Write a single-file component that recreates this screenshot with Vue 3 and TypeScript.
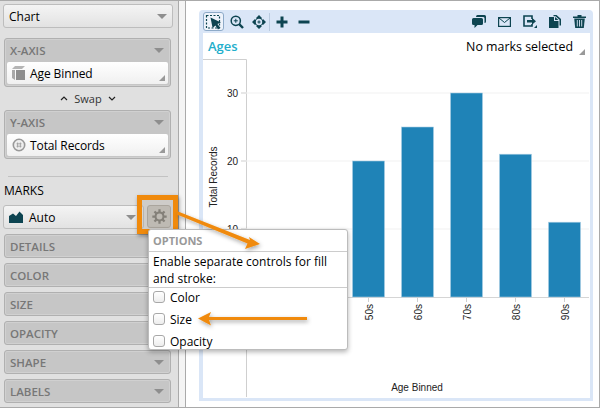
<script setup lang="ts">
interface Bar { label: string; value: number; x: number }
const bars: Bar[] = [
  { label: '50s', value: 20, x: 149.5 },
  { label: '60s', value: 25, x: 198.5 },
  { label: '70s', value: 30, x: 247.5 },
  { label: '80s', value: 21, x: 296.5 },
  { label: '90s', value: 11, x: 345.5 },
]
const baseY = 238
const unit = 6.8
const ticks = [10, 20, 30]
const tickY = (v: number) => baseY - v * unit
const closedPanels = ['DETAILS', 'COLOR', 'SIZE', 'OPACITY', 'SHAPE', 'LABELS']
const options = ['Color', 'Size', 'Opacity']
</script>

<template>
  <div class="page">
    <aside class="sidebar">
      <div class="select chart-select"><span>Chart</span><i class="caret"></i></div>

      <section class="panel axis first">
        <header><span>X-AXIS</span><i class="caret"></i></header>
        <div class="field">
          <svg class="field-icon" viewBox="0 0 14 14" width="14" height="14">
            <path d="M0 3 L3 0 H13 L10 3 Z" fill="#b5b5b5" />
            <path d="M0 4 H3 V14 L0 12 Z" fill="#a8a8a8" />
            <rect x="4" y="4" width="9" height="10" fill="#8d8d8d" />
          </svg>
          <span>Age Binned</span><i class="corner"></i>
        </div>
      </section>

      <div class="swap">
        <svg width="8" height="5" viewBox="0 0 8 5"><path d="M1 4 L4 1 L7 4" fill="none" stroke="#222" stroke-width="1.2" /></svg>
        <span>Swap</span>
        <svg width="8" height="5" viewBox="0 0 8 5"><path d="M1 1 L4 4 L7 1" fill="none" stroke="#222" stroke-width="1.2" /></svg>
      </div>

      <section class="panel axis">
        <header><span>Y-AXIS</span><i class="caret"></i></header>
        <div class="field">
          <svg class="field-icon" viewBox="0 0 14 14" width="14" height="14">
            <circle cx="7" cy="7" r="5.7" fill="#eee" stroke="#999" stroke-width="1.6" />
            <path d="M5.6 4.5 V9.5 M8.4 4.5 V9.5 M4.5 5.8 H9.5 M4.5 8.2 H9.5" stroke="#999" stroke-width="0.8" />
          </svg>
          <span>Total Records</span><i class="corner"></i>
        </div>
      </section>

      <hr class="rule" />
      <div class="marks-title">MARKS</div>

      <div class="marks-row">
        <div class="select auto-select">
          <svg width="14" height="12" viewBox="0 0 14 12"><path d="M0 5 L4 2.5 L7 5 L10.5 0.5 L14 4 V12 H0 Z" fill="#0d4451" /></svg>
          <span>Auto</span><i class="caret"></i>
        </div>
        <button class="gear" type="button" aria-label="Options">
          <svg width="15" height="15" viewBox="0 0 14 14">
            <circle cx="7" cy="7" r="3.7" fill="none" stroke="#76736d" stroke-width="1.9" />
            <path d="M7 0.3 V3 M7 11 V13.7 M0.3 7 H3 M11 7 H13.7 M2.3 2.3 L4.1 4.1 M9.9 9.9 L11.7 11.7 M2.3 11.7 L4.1 9.9 M9.9 4.1 L11.7 2.3" stroke="#76736d" stroke-width="2.1" />
          </svg>
        </button>
      </div>

      <div class="closed-list">
        <section v-for="p in closedPanels" :key="p" class="panel closed">
          <header><span>{{ p }}</span><i class="caret"></i></header>
        </section>
      </div>
    </aside>

    <div class="gutter"></div>

    <main class="content">
      <div class="chart-card">
        <div class="toolbar">
          <div class="tool-group">
            <span class="tool-active">
              <svg width="18" height="16" viewBox="0 0 18 16">
                <rect x="1.5" y="1.5" width="13" height="12.5" fill="none" stroke="#0d4451" stroke-width="1.2" stroke-dasharray="2 1.5" />
                <path d="M5.5 3.5 L16 8.5 L12.4 9.9 L15.4 13.8 L13 15.4 L10.4 11.4 L7.6 14 Z" fill="#0d4451" />
              </svg>
            </span>
            <svg class="zoom-tool" width="14" height="14" viewBox="0 0 14 14">
              <circle cx="5.8" cy="5.8" r="4.6" fill="none" stroke="#0d4451" stroke-width="1.5" />
              <path d="M9.2 9.2 L13 13" stroke="#0d4451" stroke-width="2.4" />
              <path d="M3.8 5.8 H7.8 M5.8 3.8 V7.8" stroke="#0d4451" stroke-width="1" />
            </svg>
            <svg class="pan" width="14" height="14" viewBox="0 0 14 14">
              <path d="M7 0 L10 3 L9.4 3.6 L11 5 L11 4 L14 7 L11 10 L10.4 9.4 L9 11 L10 11 L7 14 L4 11 L5 11 L3.6 9.4 L3 10 L0 7 L3 4 L3 5 L4.6 3.6 L4 3 Z" fill="#0d4451" />
              <circle cx="7" cy="7" r="3.2" fill="#dae6f7" />
              <path d="M5.4 7 H8.6 M7 5.4 V8.6" stroke="#0d4451" stroke-width="1" />
            </svg>
            <span class="tool-sep"></span>
            <svg class="plus" width="12" height="12" viewBox="0 0 12 12"><path d="M6 0.5 V11.5 M0.5 6 H11.5" stroke="#0d4451" stroke-width="3" /></svg>
            <svg class="minus" width="12" height="12" viewBox="0 0 12 12"><path d="M0.5 6 H11.5" stroke="#0d4451" stroke-width="3" /></svg>
          </div>
          <div class="tool-group right">
            <svg width="14" height="13" viewBox="0 0 14 13">
              <path d="M5.5 0 H12.5 Q14 0 14 1.5 V6.5 Q14 8 12.5 8 L12.5 3.2 Q12.5 2 11 2 H4 Q4 0 5.5 0 Z" fill="#0d4451" />
              <path d="M1.5 3 H9.5 Q11 3 11 4.5 V8.5 Q11 10 9.5 10 H5.5 L2.5 13 V10 H1.5 Q0 10 0 8.5 V4.5 Q0 3 1.5 3 Z" fill="#0d4451" />
            </svg>
            <svg width="13" height="10" viewBox="0 0 13 10">
              <rect x="0.6" y="0.6" width="11.8" height="8.8" fill="none" stroke="#0d4451" stroke-width="1.2" />
              <path d="M1 1 L6.5 5.5 L12 1" fill="none" stroke="#0d4451" />
            </svg>
            <svg width="14" height="13" viewBox="0 0 14 13">
              <path d="M9 4 V1 H1 V11 H9 V9" fill="none" stroke="#0d4451" stroke-width="1.6" />
              <path d="M4 5 H9 V2.8 L13 6.3 L9 9.8 V7.6 H4 Z" fill="#0d4451" />
              <path d="M11 13 L14 10 V13 Z" fill="#0d4451" />
            </svg>
            <svg width="12" height="13" viewBox="0 0 12 13">
              <path d="M0 2 H5 V6 H9.5 V13 H0 Z" fill="#0d4451" />
              <path d="M6 2 L9.5 5 H6 Z" fill="#0d4451" />
              <path d="M4.5 0 H7.5 L12 4 V10.5 H10.5 V4.8 L6.5 1.2 H4.5 Z" fill="#0d4451" />
            </svg>
            <svg width="13" height="13" viewBox="0 0 13 13">
              <path d="M0 1.6 H13 V3 H0 Z M4.5 0 H8.5 V1.4 H4.5 Z" fill="#0d4451" />
              <path d="M1.2 3.6 H11.8 L10.8 13 H2.2 Z" fill="#0d4451" />
              <path d="M4.3 5 V11.5 M6.5 5 V11.5 M8.7 5 V11.5" stroke="#dae6f7" stroke-width="0.9" />
            </svg>
          </div>
        </div>

        <div class="plot-card">
          <div class="title-row">
            <span class="title">Ages</span>
            <span class="selection">No marks selected</span>
            <i class="corner sel-corner"></i>
          </div>
          <svg class="plot" width="386" height="338" viewBox="0 0 386 338">
            <path d="M0 0.5 H43.5 V338" fill="none" stroke="#cfcfcf" />
            <g v-for="t in ticks" :key="t">
              <line x1="43" x2="386" :y1="tickY(t)" :y2="tickY(t)" stroke="#f1f1f1" />
              <line x1="38" x2="43" :y1="tickY(t)" :y2="tickY(t)" stroke="#cfcfcf" />
              <text x="35" :y="tickY(t) + 3.5" text-anchor="end" class="chart-text">{{ t }}</text>
            </g>
            <line x1="43" x2="386" :y1="baseY + 0.5" :y2="baseY + 0.5" stroke="#d5d5d5" />
            <g v-for="b in bars" :key="b.label">
              <rect :x="b.x" :y="tickY(b.value)" width="32" :height="b.value * unit" fill="#1f83b7" stroke="#a8cde3" stroke-width="0.6" />
              <line :x1="b.x + 16" :x2="b.x + 16" :y1="baseY" :y2="baseY + 5" stroke="#cfcfcf" />
              <text class="chart-text" text-anchor="end" :transform="`translate(${b.x + 20} ${baseY + 7}) rotate(-90)`">{{ b.label }}</text>
            </g>
            <text class="chart-text" text-anchor="middle" transform="translate(14 118) rotate(-90)">Total Records</text>
            <text class="chart-text" x="214" y="332" text-anchor="middle">Age Binned</text>
          </svg>
        </div>
      </div>
    </main>

    <div class="highlight"></div>

    <div class="popover">
      <div class="pop-title">OPTIONS</div>
      <p class="pop-text">Enable separate controls for fill and stroke:</p>
      <label v-for="o in options" :key="o" class="pop-option">
        <span class="check"></span>{{ o }}
      </label>
    </div>

    <svg class="arrows" width="600" height="408" viewBox="0 0 600 408">
      <defs>
        <filter id="arrow-shadow" x="-20%" y="-40%" width="140%" height="200%">
          <feDropShadow dx="1" dy="2" stdDeviation="2" flood-color="#000" flood-opacity="0.35" />
        </filter>
      </defs>
      <g filter="url(#arrow-shadow)" fill="#f08a0c">
        <path d="M178 211.5 L250 240 L249 237 L260 244 L245 249 L247.5 243.5 L177 214.5 Z" />
        <path d="M307 317 H209 L211 312 L198 318.5 L211 325.5 L209 320 H307 Z" />
      </g>
    </svg>
  </div>
</template>

<style>
html, body { margin: 0; padding: 0; background: #fff; }
</style>

<style scoped>
* { box-sizing: border-box; }
.page {
  position: relative;
  width: 600px;
  height: 408px;
  overflow: hidden;
  display: flex;
  background: #fff;
  font-family: "Open Sans", "Noto Sans", sans-serif;
  font-size: 12px;
  color: #000;
  border-top: 1px solid #aaa;
  border-right: 1px solid #aaa;
  border-bottom: 1px solid #aaa;
}
.sidebar {
  width: 179px;
  flex: none;
  background: #e0e0e0;
  border-right: 1px solid #aaa;
  padding: 3px 6px 0 3px;
  display: flex;
  flex-direction: column;
}
.gutter {
  width: 6px;
  flex: none;
  background: #f4f4f4;
}
.select {
  height: 24px;
  border: 1px solid #bdbdbd;
  border-radius: 3px;
  background: linear-gradient(#f4f4f4, #e2e2e2);
  display: flex;
  align-items: center;
  padding: 0 5px 0 5px;
  justify-content: space-between;
}
.chart-select { width: 170px; }
.caret {
  display: block;
  width: 0;
  height: 0;
  border-left: 5px solid transparent;
  border-right: 5px solid transparent;
  border-top: 5px solid #8e8e8e;
}
.panel {
  background: #c6c6c6;
  border: 1px solid #b0b0b0;
  border-radius: 3px;
  width: 167px;
  margin-left: 1px;
  box-shadow: inset 0 0 0 1px #d0d0d0;
}
.panel header {
  display: flex;
  align-items: center;
  justify-content: space-between;
  height: 22px;
  padding: 0 6px 0 5px;
  font-weight: 600;
  font-size: 11.5px;
  color: #777;
}
.axis { height: 49px; }
.axis.first { margin-top: 10px; }
.field {
  position: relative;
  margin: 1px 2px 0;
  height: 22px;
  background: linear-gradient(#fff, #f0f0f0);
  border-radius: 2px;
  display: flex;
  align-items: center;
  gap: 4px;
  padding-left: 5px;
  letter-spacing: -0.1px;
}
.field-icon { flex: none; }
.corner {
  position: absolute;
  right: 3px;
  bottom: 3px;
  width: 0;
  height: 0;
  border-left: 6px solid transparent;
  border-bottom: 6px solid #999;
}
.swap {
  height: 23px;
  display: flex;
  align-items: center;
  justify-content: center;
  gap: 6px;
  font-size: 11px;
  width: 170px;
  color: #333;
}
.rule {
  margin: 17px 0 0 5px;
  width: 160px;
  border: 0;
  border-top: 1px solid #c2c2c2;
}
.marks-title {
  margin-top: 6px;
  padding-left: 1px;
  height: 16px;
  line-height: 16px;
}
.marks-row {
  margin-top: 6px;
  display: flex;
  gap: 3px;
}
.auto-select {
  width: 141px;
  justify-content: flex-start;
  gap: 6px;
  padding: 0 7px 0 5px;
}
.auto-select .caret { margin-left: auto; }
.gear {
  width: 24px;
  height: 23px;
  padding: 0;
  border: 1px solid #aca8a1;
  border-radius: 3px;
  background: #c9c6c0;
  display: flex;
  align-items: center;
  justify-content: center;
}
.closed-list {
  margin-top: 5px;
  display: flex;
  flex-direction: column;
  gap: 5px;
}
.closed { height: 24px; }
.content {
  flex: 1;
  border-left: 1px solid #aaa;
  padding: 9px 6px 6px 13px;
  display: flex;
}
.chart-card {
  flex: 1;
  background: #dae6f7;
  border-radius: 4px 4px 0 0;
  padding: 0 3px 3px 4px;
  display: flex;
  flex-direction: column;
}
.toolbar {
  height: 23px;
  flex: none;
  display: flex;
  align-items: center;
  justify-content: space-between;
  padding-right: 4px;
}
.tool-group { display: flex; align-items: center; }
.tool-group.right { gap: 12px; }
.tool-active {
  width: 21px;
  height: 19px;
  display: flex;
  align-items: center;
  justify-content: center;
  background: #eef3fb;
  border: 1px solid #8eaac8;
  border-radius: 3px;
}
.zoom-tool { margin-left: 6px; }
.pan { margin-left: 8px; }
.tool-sep { width: 1px; height: 18px; background: #b9cadf; margin-left: 3px; }
.plus { margin-left: 6px; }
.minus { margin-left: 10px; }
.plot-card {
  flex: 1;
  background: #fff;
  display: flex;
  flex-direction: column;
  min-height: 0;
}
.title-row {
  position: relative;
  flex: none;
  height: 26px;
  display: flex;
  justify-content: space-between;
  align-items: center;
  padding: 0 17px 0 5px;
}
.title { color: #22aecb; font-weight: 600; font-size: 13px; }
.selection { font-size: 12.4px; }
.sel-corner { right: 5px; bottom: 4px; }
.plot { display: block; flex: none; }
.chart-text {
  font-family: "Liberation Sans", Arial, sans-serif;
  font-size: 10px;
  fill: #222;
}
.highlight {
  position: absolute;
  left: 137px;
  top: 194px;
  width: 41px;
  height: 39px;
  border: 5px solid #f08a0c;
  background: rgba(165, 160, 150, 0.3);
  box-shadow: 1px 2px 4px rgba(0, 0, 0, 0.4);
}
.popover {
  position: absolute;
  left: 148px;
  top: 228px;
  width: 200px;
  height: 121px;
  background: #fff;
  border: 1px solid #bcbcbc;
  border-radius: 3px;
  box-shadow: 0 2px 5px rgba(0, 0, 0, 0.3);
  display: flex;
  flex-direction: column;
}
.pop-title {
  height: 22px;
  line-height: 22px;
  padding-left: 4px;
  font-weight: 700;
  font-size: 11px;
  color: #999;
  border-bottom: 1px solid #ccc;
  flex: none;
}
.pop-text {
  margin: 0;
  padding: 1px 4px 0;
  height: 36px;
  line-height: 17px;
  border-bottom: 1px solid #ccc;
  flex: none;
}
.pop-option {
  height: 22px;
  display: flex;
  align-items: center;
  gap: 5px;
  padding: 0 0 4px 4px;
  flex: none;
}
.check {
  width: 12px;
  height: 12px;
  border: 1px solid #a8a8a8;
  border-radius: 3px;
  background: linear-gradient(#fff, #ededed);
}
.arrows {
  position: absolute;
  left: 0;
  top: -1px;
  pointer-events: none;
}
</style>
